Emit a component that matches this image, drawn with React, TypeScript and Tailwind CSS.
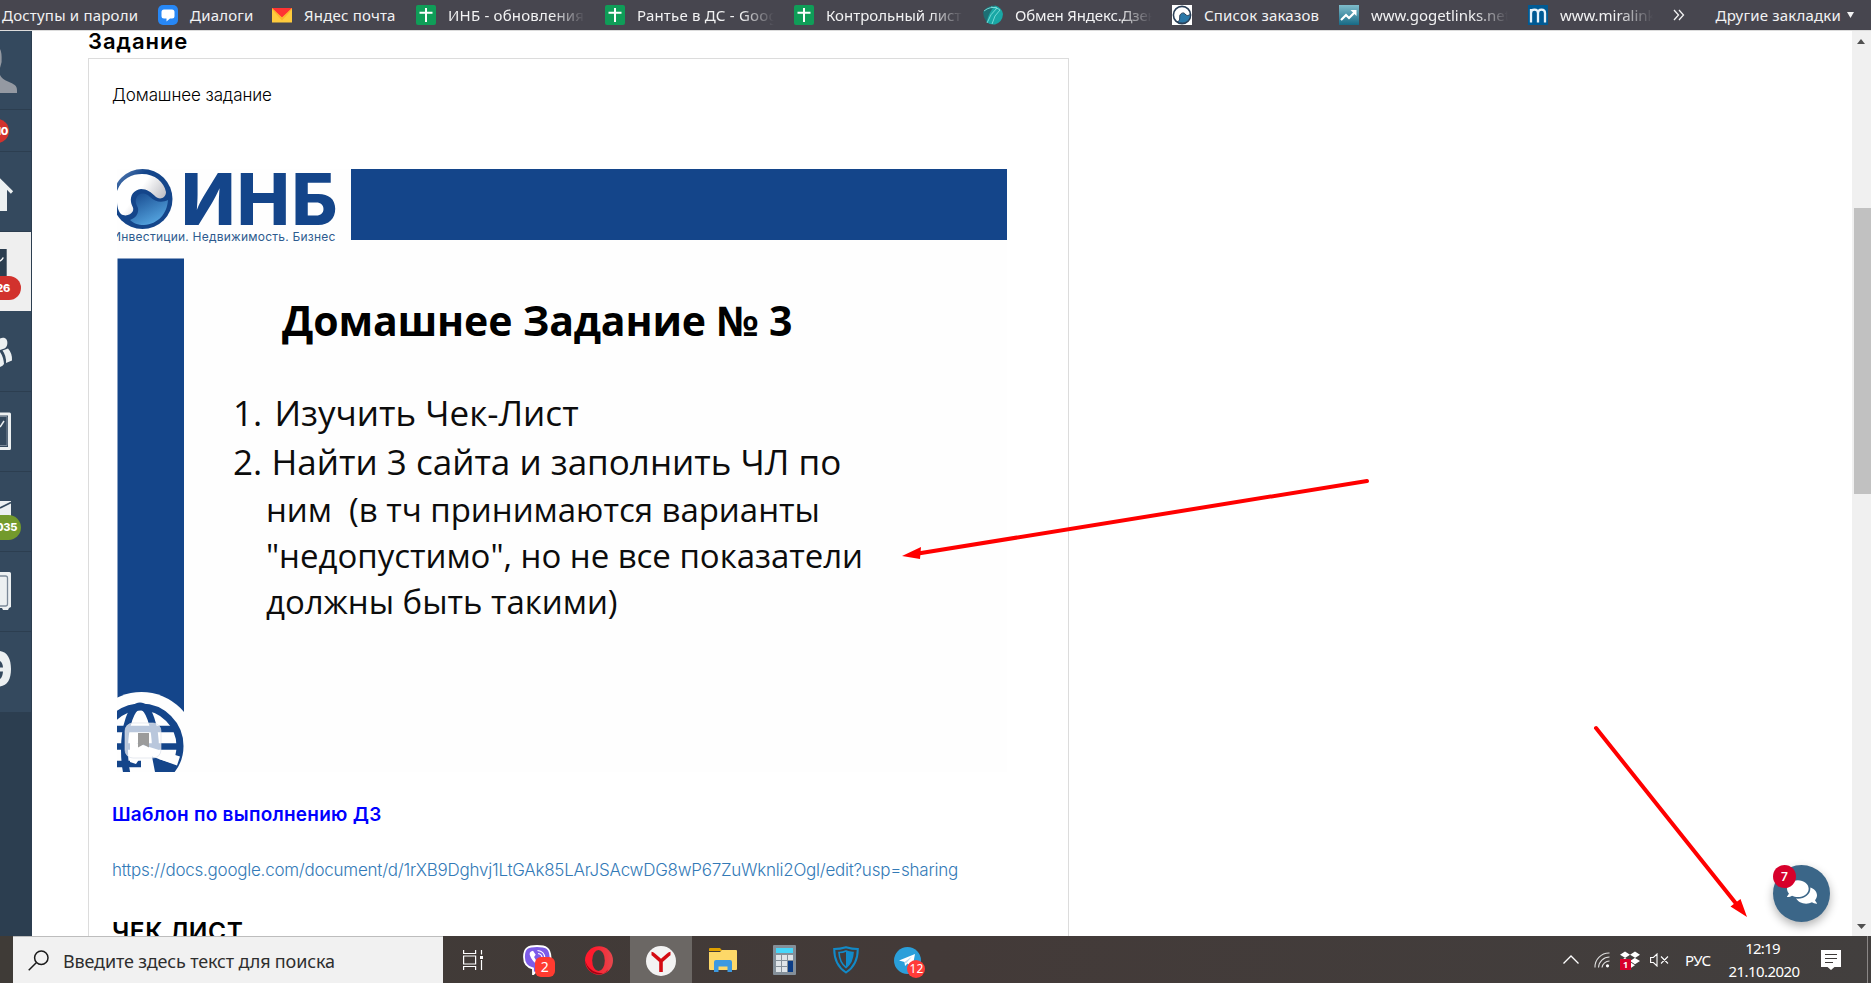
import React from "react";
import { FaComments, FaDropbox } from "react-icons/fa";

const SheetsIcon = () => (
  <svg viewBox="0 0 20 20" className="size-5 shrink-0">
    <rect width="20" height="20" rx="2" fill="#0f9d58" />
    <path d="M10 3v14M3.500 7.700h13" stroke="#fff" strokeWidth="2" />
  </svg>
);

const SwirlIcon = () => (
  <svg viewBox="0 0 20 20" className="size-5 shrink-0">
    <rect width="20" height="20" fill="#fff" />
    <circle cx="10" cy="10" r="8.600" fill="#fff" stroke="#2a3f57" strokeWidth="1.600" />
    <path d="M5 17c4-1 2-5 3-7s4-3 5-1 4 2 5.500 0c.5 5-3.500 9-8 9-2 0-4-.2-5.500-1z" fill="#2b78a8" stroke="#2a3f57" />
  </svg>
);

type Bookmark = { label: string; icon: React.ReactNode; text: string };

const faded = "w-[137px] overflow-hidden [mask-image:linear-gradient(to_right,#000_76%,transparent)]";

const bookmarks: Bookmark[] = [
  {
    label: "Диалоги",
    text: "w-[62px]",
    icon: (
      <svg viewBox="0 0 20 20" className="size-5 shrink-0">
        <rect width="20" height="20" rx="5" fill="#2787f5" />
        <path d="M6 4.500h8a2.500 2.500 0 0 1 2.500 2.500v4a2.500 2.500 0 0 1-2.500 2.500h-2l-3.500 3v-3H6A2.500 2.500 0 0 1 3.500 11V7A2.500 2.500 0 0 1 6 4.500z" fill="#fff" />
      </svg>
    ),
  },
  {
    label: "Яндес почта",
    text: "w-[92px]",
    icon: (
      <svg viewBox="0 0 20 20" className="size-5 shrink-0">
        <rect y="3" width="20" height="14.500" fill="#ffcb3d" />
        <path d="M0 3l10 10L20 3v1.500l-10 11-10-11z" fill="#fbb52c" />
        <path d="M0 3h20l-10 9.500z" fill="#f33" />
      </svg>
    ),
  },
  { label: "ИНБ - обновления", text: faded, icon: <SheetsIcon /> },
  { label: "Рантье в ДС - Google", text: faded, icon: <SheetsIcon /> },
  { label: "Контрольный лист", text: faded + " tracking-[0px]", icon: <SheetsIcon /> },
  {
    label: "Обмен Яндекс.Дзен",
    text: faded + " tracking-[-0.150px]",
    icon: (
      <svg viewBox="0 0 20 20" className="size-5 shrink-0">
        <path d="M0 7Q4 0 12 .5C8 6 5 11 3.500 17Q0 12 0 7z" fill="#1d6f74" />
        <path d="M12 .5q7 2 8 8.500-.5 8-8 10.500-5 .5-8.500-2.500Q6 7 12 .5z" fill="#19a7a5" />
        <path d="M1 6Q7 1 14 3 7 9 4 18M8 2q6 0 9 3-6 5-8 14" fill="none" stroke="#7fe0dc" strokeWidth=".9" />
      </svg>
    ),
  },
  { label: "Список заказов", text: "w-[115px]", icon: <SwirlIcon /> },
  {
    label: "www.gogetlinks.net",
    text: faded + " tracking-[-0.020px]",
    icon: (
      <svg viewBox="0 0 20 20" className="size-5 shrink-0">
        <defs>
          <linearGradient id="gl" x2="0" y2="1">
            <stop stopColor="#7fbccb" />
            <stop offset="1" stopColor="#176a86" />
          </linearGradient>
        </defs>
        <rect width="20" height="20" fill="url(#gl)" />
        <path d="M2 15l5-5 3 3 6-6" fill="none" stroke="#fff" strokeWidth="2.200" />
        <path d="M11.500 5h6v6z" fill="#fff" />
      </svg>
    ),
  },
  {
    label: "www.miralinks.ru",
    text: "w-[93px] overflow-hidden tracking-[-0.050px] [mask-image:linear-gradient(to_right,#000_62%,transparent)]",
    icon: (
      <svg viewBox="0 0 20 20" className="size-5 shrink-0">
        <rect width="20" height="20" fill="#005a94" />
        <path d="M3 17.500V4M3 8c0-4.500 7-4.500 7 0v9.500M10 8c0-4.500 7-4.500 7 0v9.500" fill="none" stroke="#e8f3fa" strokeWidth="2.300" />
      </svg>
    ),
  },
];

function BookmarksBar() {
  return (
    <div className="flex h-[30px] shrink-0 items-center bg-[#47464f] pl-[2px] font-['Noto_Sans',sans-serif] text-[15px] leading-[30px] tracking-[0.200px] whitespace-nowrap text-[#f2f2f3]">
      <span className="w-[156px]">Доступы и пароли</span>
      <div className="flex gap-5">
        {bookmarks.map((b) => (
          <div key={b.label} className="flex items-center gap-3">
            {b.icon}
            <span className={b.text}>{b.label}</span>
          </div>
        ))}
      </div>
      <svg viewBox="0 0 12 12" className="ml-[20px] size-3 shrink-0">
        <path d="M1 1l4.500 5L1 11M6 1l4.500 5L6 11" fill="none" stroke="#f2f2f3" strokeWidth="1.300" />
      </svg>
      <span className="mr-[6px] ml-auto">Другие закладки</span>
      <svg viewBox="0 0 7 6" className="mr-[17px] h-[6px] w-[7px] shrink-0">
        <path d="M0 0h7L3.500 6z" fill="#f2f2f3" />
      </svg>
    </div>
  );
}

function SideItem({ children, className = "" }: { children: React.ReactNode; className?: string }) {
  return <div className={"relative w-full shrink-0 overflow-hidden border-b border-[#2c3e50] " + className}>{children}</div>;
}

function Badge({ children, className }: { children: React.ReactNode; className: string }) {
  return (
    <span className={"absolute flex items-center justify-end rounded-full font-['Inter',sans-serif] text-[11px] leading-none font-extrabold tracking-[-0.300px] text-white " + className}>
      {children}
    </span>
  );
}

function Sidebar() {
  return (
    <div className="flex w-8 shrink-0 flex-col border-r border-[#2c3e50] bg-[#2c3e50] *:bg-[#34495e]">
      <SideItem className="h-[79px]">
        <svg viewBox="0 1 31 79" className="h-[79px] w-[31px]">
          <path d="M0 19q2 3 1.600 13L0 38v7q2 4 8 6.500c6 2.500 9 4 9 9V63H0z" fill="#9499a2" />
        </svg>
      </SideItem>
      <SideItem className="h-[42px]">
        <Badge className="top-[9px] left-[-15px] size-6 bg-[#d2322d] pr-px">10</Badge>
      </SideItem>
      <SideItem className="h-[80px]">
        <svg viewBox="0 0 31 79" className="h-[79px] w-[31px]">
          <path d="M0 30l7 6v23H0z" fill="#ecf0f1" />
          <path d="M-2 26.500l14 14" stroke="#ecf0f1" strokeWidth="3.200" />
        </svg>
      </SideItem>
      <div className="relative h-[79px] shrink-0 overflow-hidden !bg-[#efefef]">
        <svg viewBox="0 0 31 79" className="h-[79px] w-[31px]">
          <path d="M0 17h6.700v28H0z" fill="#2c3e50" />
          <path d="M0 29q2-1 3.300-3.500" fill="none" stroke="#fff" strokeWidth="1.500" />
        </svg>
        <Badge className="top-[44px] left-[-19px] h-6 w-10 bg-[#d2322d] pr-[11px]">26</Badge>
      </div>
      <SideItem className="h-[81px]">
        <svg viewBox="0 0 31 80" className="h-[80px] w-[31px]">
          <path d="M0 27.500c5-2 8 1 7.300 5.500C7 36 5 37.500 3 38l-3 1z" fill="#ecf0f1" />
          <path d="M0 41q3.500 5 4 12-1 2-4 3z" fill="#ecf0f1" />
          <path d="M2.500 39.500l5.500-2q4.500 5 4 12l-6 2.500q.5-7-3.500-12.500z" fill="#ecf0f1" />
        </svg>
      </SideItem>
      <SideItem className="h-[80px]">
        <svg viewBox="0 0 31 79" className="h-[79px] w-[31px]">
          <path d="M-3 22h12.500v34.500H-3" fill="none" stroke="#ecf0f1" strokeWidth="3" strokeLinejoin="round" />
          <path d="M-2 24.500h9v29h-9" fill="none" stroke="#7b8998" strokeWidth="1" />
          <path d="M0 35l4-6" stroke="#ecf0f1" strokeWidth="1.500" />
        </svg>
      </SideItem>
      <SideItem className="h-[80px]">
        <svg viewBox="0 0 31 79" className="h-[79px] w-[31px]">
          <path d="M0 29h11v25H0z" fill="#ecf0f1" />
          <path d="M0 36l11-5.500" stroke="#34495e" strokeWidth="1.800" />
        </svg>
        <Badge className="top-[43px] left-[-19px] h-[25px] w-10 bg-[#739a2c] pr-1">035</Badge>
      </SideItem>
      <SideItem className="h-[80px]">
        <svg viewBox="0 0 31 79" className="h-[79px] w-[31px]">
          <path d="M0 20h9.500q1.500 0 1.500 1.500V55l-2 1-1 2H3l-1-2H0z" fill="#ecf0f1" />
          <path d="M-2 24h7.500q2 0 2 2v26q0 2-2 2H-2" fill="none" stroke="#7b8998" strokeWidth="1.300" />
        </svg>
      </SideItem>
      <SideItem className="h-[80px] border-b-0">
        <svg viewBox="0 0 31 79" className="h-[79px] w-[31px]">
          <path d="M0 19c7.500 1 11 8 11 18S7.500 53.500 0 54.500v-7.500q2.500-1.500 3-7.500H0v-4h3q-.3-5-3-6.500z" fill="#ecf0f1" />
        </svg>
      </SideItem>
    </div>
  );
}

function Logo() {
  return (
    <svg viewBox="0 0 60 60" className="h-[60px] w-[60px] shrink-0">
      <defs>
        <linearGradient id="wave" x2=".6" y2="1">
          <stop stopColor="#14458a" />
          <stop offset="1" stopColor="#55a5e0" />
        </linearGradient>
        <linearGradient id="ring" x2="1" y2="1">
          <stop stopColor="#6b8fc0" />
          <stop offset=".3" stopColor="#14458a" />
        </linearGradient>
        <linearGradient id="pearl" x2="1" y2=".6">
          <stop offset=".5" stopColor="#fff" />
          <stop offset="1" stopColor="#b9b9c0" />
        </linearGradient>
      </defs>
      <circle cx="25.500" cy="30" r="30" fill="url(#ring)" />
      <path d="M0 22C5 9 15 5 25 5c13 0 22 8 24 18 0 6-6 8-10 5-5-5-9-8-15-8-7 1-11 6-10 13 1 5 3 5 2 9-2 4-8 6-12 3-3-3-4-9-4-12z" fill="url(#pearl)" />
      <path d="M13 51c6-2 9-7 8-12-1-3-3-5-2-9 2-7 10-7 14-2 5 5 12 6 18 3-1 14-10 24-24 25-6 0-11-2-14-5z" fill="url(#wave)" />
    </svg>
  );
}

function BlueColumn() {
  return (
    <svg viewBox="0 0 67 514" className="h-[514px] w-[67px] shrink-0">
      <rect x=".5" y=".5" width="66.500" height="514" fill="#14458a" />
      <circle cx="24.500" cy="489" r="55" fill="#fefefe" />
      <rect y="489" width="67" height="25" fill="#fefefe" />
      <g fill="none" stroke="#14458a">
        <circle cx="24" cy="488" r="39" strokeWidth="7" />
        <ellipse cx="23" cy="492" rx="15.500" ry="44" strokeWidth="7" />
        <path d="M0 471h58M0 488.500h62M0 506h24" strokeWidth="6.500" />
      </g>
      <path d="M32 498l26 8-7 8H36z" fill="#14458a" />
      <path d="M13 483l50 15.500-3 9-25-9 3 15.500h-7l-6-17-6 9-6-2z" fill="#fefefe" />
      <rect x="8" y="465" width="36" height="35" rx="8" fill="#fff" fillOpacity=".7" stroke="#d6dce6" strokeWidth=".6" />
      <path d="M21 475h11v14.500l-5.500-3-5.500 3z" fill="#9b9b9b" />
    </svg>
  );
}

function Slide() {
  return (
    <div className="mt-[64px] ml-[5px] flex h-[603px] w-[890px] flex-col overflow-hidden bg-[#fefefe]">
      <div className="flex h-[89px] shrink-0">
        <div className="w-[234px] overflow-hidden whitespace-nowrap">
          <div className="flex h-[60px]">
            <Logo />
            <span className="ml-[4px] font-['Inter',sans-serif] text-[71px] leading-[60px] font-extrabold tracking-[1.500px] text-[#14458a]">ИНБ</span>
          </div>
          <div className="-ml-[5px] font-['Inter',sans-serif] text-[12px] leading-4 tracking-[0.230px] text-[#2d5b8e]">Инвестиции. Недвижимость. Бизнес</div>
        </div>
        <div className="h-[71px] flex-1 bg-[#14458a]" />
      </div>
      <div className="flex flex-1">
        <BlueColumn />
        <div className="font-['Open_Sans',sans-serif] whitespace-pre text-[#0c0c0c]">
          <h2 className="mt-[38px] ml-[98px] text-[41px] leading-[48px] font-bold tracking-[-0.150px] text-black">Домашнее Задание № 3</h2>
          <ol className="mt-[45px] ml-[49px] text-[35px] leading-[48px]">
            <li className="flex">
              <span className="w-[41.500px]">1.</span>Изучить Чек-Лист
            </li>
            <li className="mt-px flex flex-wrap">
              <span className="w-[38.500px]">2.</span>Найти 3 сайта и заполнить ЧЛ по
              <p className="w-full pt-px pl-[33px] text-[33px] leading-[46px] tracking-[-0.030px]">{"ним  (в тч принимаются варианты\n\"недопустимо\", но не все показатели\nдолжны быть такими)"}</p>
            </li>
          </ol>
        </div>
      </div>
    </div>
  );
}

function Page() {
  return (
    <div className="flex min-h-0 flex-1 border-t border-[#dcdcdc] bg-white">
      <Sidebar />
      <div className="flex-1 overflow-hidden pl-14 font-['Inter',sans-serif]">
        <h1 className="mb-[7px] h-5 text-[22px] leading-5 font-semibold tracking-[0.950px] text-black">Задание</h1>
        <div className="h-[900px] w-[981px] border border-[#dcdcdc] pt-[26px] pl-[23px]">
          <p className="text-[17px] leading-5 font-light tracking-[-0.100px] text-black">Домашнее задание</p>
          <Slide />
          <p className="mt-[31px] text-[19px] leading-6 font-semibold tracking-[0.250px] text-[#0000ff]">Шаблон по выполнению ДЗ</p>
          <p className="mt-[33px] text-[17px] leading-5 font-light tracking-[-0.245px] text-[#337ab7]">
            https://docs.google.com/document/d/1rXB9Dghvj1LtGAk85LArJSAcwDG8wP67ZuWknli2Ogl/edit?usp=sharing
          </p>
          <p className="mt-[36px] text-[24.500px] leading-[30px] font-semibold tracking-[0.600px] text-black">ЧЕК ЛИСТ</p>
        </div>
      </div>
      <div className="flex w-[19px] shrink-0 flex-col items-center bg-[#f0f0f0]">
        <svg viewBox="0 0 8 5" className="mt-[8px] ml-[-1px] h-[5px] w-2 shrink-0">
          <path d="M0 5h8L4 0z" fill="#505050" />
        </svg>
        <div className="mt-[164px] ml-[2px] h-[286px] w-[17px] shrink-0 bg-[#c1c1c1]" />
        <svg viewBox="0 0 9 5" className="mt-auto mb-[7px] h-[5px] w-[9px] shrink-0">
          <path d="M0 0h9L4.500 5z" fill="#505050" />
        </svg>
      </div>
    </div>
  );
}

function Cell({ children, active = false }: { children: React.ReactNode; active?: boolean }) {
  return <div className={"flex h-full w-[61.700px] shrink-0 items-center justify-center " + (active ? "bg-[#6b6764]" : "pt-px")}>{children}</div>;
}

function Taskbar() {
  return (
    <div className="flex h-[47px] shrink-0 items-center bg-linear-to-r from-[#3f3b37] via-[#433a38] to-[#423f3e] font-['Noto_Sans',sans-serif] text-white">
      <div className="ml-[13px] flex h-full w-[430px] shrink-0 items-center border-t border-[#bdbdbd] bg-[#f1f1f1] pl-[15px]">
        <svg viewBox="0 0 21 21" className="mt-px size-[21px]">
          <circle cx="13.300" cy="7.700" r="6.700" fill="none" stroke="#1a1a1a" strokeWidth="1.500" />
          <path d="M8.500 12.500L.7 20.300" stroke="#1a1a1a" strokeWidth="1.500" />
        </svg>
        <span className="mt-px ml-[14px] text-[18px] leading-[26px] tracking-[-0.160px] text-[#2e2e2e]">Введите здесь текст для поиска</span>
      </div>
      <div className="mr-[4px] flex w-[60px] shrink-0 justify-center pt-px">
        <svg viewBox="0 0 20 20" className="size-5" fill="none" stroke="#fff" strokeWidth="1.200">
          <path d="M.6 0v3.500h12V0M.6 20v-3.500h12V20M.6 6h12v8H.6zM18.500 0v4.500M18.500 10v10" />
          <path d="M17 7.500h3" strokeWidth="3" />
        </svg>
      </div>
      <Cell>
        <div className="relative size-[30px]">
          <svg viewBox="0 0 30 30" className="size-[30px]">
            <path d="M14 1c9 0 13 2 13.500 11S25 24 15 24.500l-5 5v-6C3 22 1 18 1 12 1 3 5 1 14 1z" fill="#7d5ce8" stroke="#fff" strokeWidth="1.800" />
            <path d="M8 6.500l2-.8 2.700 4-1.600 2.200q1.300 3.600 4.700 5.200l2.200-1.600 3.500 2.700-.8 2.600q-2 1.400-4.500 0Q9 17 6.700 9.700 6.300 7.500 8 6.500z" fill="#fff" />
            <path d="M14.500 5.500q7 .5 7.500 8M15 8.500q4 .5 4.300 5" stroke="#fff" strokeWidth="1.200" fill="none" />
          </svg>
          <span className="absolute top-[12px] left-[12px] flex size-5 items-center justify-center rounded-[6px] bg-[#ff3b30] text-[14px] leading-none">2</span>
        </div>
      </Cell>
      <Cell>
        <svg viewBox="0 0 28 29" className="-ml-[2px] h-[29px] w-7">
          <defs>
            <linearGradient id="op" x2="1" y2="0">
              <stop offset=".3" stopColor="#ff1b2d" />
              <stop offset="1" stopColor="#e5484d" />
            </linearGradient>
          </defs>
          <ellipse cx="14" cy="14.500" rx="14" ry="14.200" fill="url(#op)" />
          <path d="M7 26.500Q1 22 0 14.500 3 24 12 26.500t11-3Q17 31 7 26.500z" fill="#a70014" />
          <ellipse cx="13.500" cy="14.500" rx="6.300" ry="10.500" fill="#403c39" />
        </svg>
      </Cell>
      <Cell active>
        <svg viewBox="0 0 30 30" className="mt-[3px] size-[30px]">
          <circle cx="15" cy="15" r="15" fill="#f3f3f3" />
          <path d="M5.500 7.500q1 0 2 1l7.500 6.500 7.500-6.500q1-1 2-1M15 15v11" fill="none" stroke="#d40a12" strokeWidth="3.600" />
        </svg>
      </Cell>
      <Cell>
        <svg viewBox="0 0 28 24" className="h-6 w-7">
          <path d="M0 1q0-1 1-1h10l2.500 3H0z" fill="#e0a100" />
          <path d="M0 4h11l2-2h14q1 0 1 1v18q0 1-1 1H1q-1 0-1-1z" fill="#fdd868" />
          <path d="M5 24V14q0-2 2-2h14q2 0 2 2v10h-4.500v-5.500h-9V24z" fill="#3c99e0" />
        </svg>
      </Cell>
      <Cell>
        <svg viewBox="0 0 23 30" className="h-[30px] w-[23px]">
          <rect width="23" height="30" rx="1" fill="#848f99" />
          <rect x="3" y="3" width="17" height="5" fill="#45d6fa" />
          <path d="M3 10h5v5H3zM9 10h5v5H9zM15 10h5v5h-5zM3 16h5v5H3zM9 16h5v5H9zM3 22h5v5H3zM9 22h5v5H9z" fill="#dfe4e8" />
          <path d="M15 16h5v11h-5z" fill="#0b3d86" />
        </svg>
      </Cell>
      <Cell>
        <svg viewBox="0 0 26 28" className="h-7 w-[26px]" fill="none" stroke="#128ac8" strokeWidth="2">
          <path d="M1.200 3Q7 3 13 1.200 19 3 24.800 3q0 16-11.800 23.500Q1.200 19 1.200 3z" />
          <path d="M6 6.500q4 0 7-1.500 3 1.500 7 1.500-.5 10-7 15-6.500-5-7-15z" strokeWidth="1.600" />
          <path d="M13 5q3 1.500 7 1.500-.5 10-7 15z" fill="#128ac8" stroke="none" />
        </svg>
      </Cell>
      <Cell>
        <div className="relative size-[27px]">
          <svg viewBox="0 0 27 27" className="size-[27px]">
            <circle cx="13.500" cy="13.500" r="13.500" fill="#2a9fda" />
            <path d="M5 13.500L21 7l-2.500 13-5-3.500-2.500 2.500-.5-4z" fill="#fff" />
            <path d="M10.500 15L18 9.500l-6 7z" fill="#b9d9ec" />
          </svg>
          <span className="absolute top-[13px] left-[13px] flex size-[18px] items-center justify-center rounded-full bg-[#ff3b38] text-[12px] leading-none">12</span>
        </div>
      </Cell>
      <div className="ml-auto flex h-full shrink-0 items-center">
        <svg viewBox="0 0 16 9" className="h-[9px] w-4">
          <path d="M.5 8.500L8 1l7.500 7.500" fill="none" stroke="#fff" strokeWidth="1.300" />
        </svg>
        <svg viewBox="0 0 16 16" className="mt-px ml-[15px] size-4" fill="none" stroke="#e0e0e0" strokeWidth="1.100">
          <path d="M1 15.500A14 14 0 0 1 15.500 1M4.500 15.500a11 11 0 0 1 11-10.500M8 15.500A7.500 7.500 0 0 1 15.500 9" />
          <circle cx="13.500" cy="13.800" r="1.600" fill="#fff" stroke="none" />
        </svg>
        <div className="relative ml-[10px] size-5">
          <FaDropbox className="size-5 text-white" />
          <span className="absolute top-[9px] left-0 flex size-[11px] items-center justify-center bg-[#d7002b] text-[9px] leading-none font-bold">1</span>
        </div>
        <svg viewBox="0 0 19 14" className="mt-px ml-[10px] h-[14px] w-[19px]" fill="none" stroke="#fff" strokeWidth="1.100">
          <path d="M.6 4.500h2.800L7 1v12L3.400 9.500H.6zM11 3.500l7 7M18 3.500l-7 7" />
        </svg>
        <span className="mt-px ml-[16px] w-[27px] text-[15px] leading-5 tracking-[-0.500px]">РУС</span>
        <div className="mt-px ml-[16px] w-[72px] text-center text-[15px] leading-[23px] tracking-[-0.550px]">
          <div className="pr-[3px] tracking-[-0.750px]">12:19</div>
          <div>21.10.2020</div>
        </div>
        <svg viewBox="0 0 20 20" className="mt-px ml-[21px] size-5">
          <path d="M0 0h20v17h-6.500l-3.500 3-3.500-3H0z" fill="#fff" />
          <path d="M4 4.500h12M4 8.500h12M4 12.500h8" stroke="#3d3a39" strokeWidth="1.200" />
        </svg>
        <div className="mr-[3px] ml-[26px] h-full w-px bg-[#8a8786]" />
      </div>
    </div>
  );
}

export default function App() {
  return (
    <div className="relative flex h-[983px] w-[1871px] flex-col overflow-hidden">
      <BookmarksBar />
      <Page />
      <Taskbar />
      <div className="absolute top-[865px] left-[1773px] flex size-[57px] items-center justify-center rounded-full bg-[#3b6688] shadow-[0_4px_10px_rgba(0,0,0,0.3)]">
        <FaComments className="-mt-[3px] size-[30px] text-white" />
        <span className="absolute top-0 left-0 flex size-[23px] items-center justify-center rounded-full bg-[#d7002b] font-['Inter',sans-serif] text-[12px] leading-none font-semibold text-white">7</span>
      </div>
      <svg viewBox="0 0 1871 983" className="pointer-events-none absolute inset-0 size-full">
        <g stroke="#f00" strokeWidth="4" strokeLinecap="round" fill="#f00">
          <path d="M1367 481L915 554" />
          <path d="M1596 728L1738 906" />
        </g>
        <path d="M902 556l19-9-1 12z M1747 917l-6.500-18-10 7.500z" fill="#f00" stroke="none" />
      </svg>
    </div>
  );
}
